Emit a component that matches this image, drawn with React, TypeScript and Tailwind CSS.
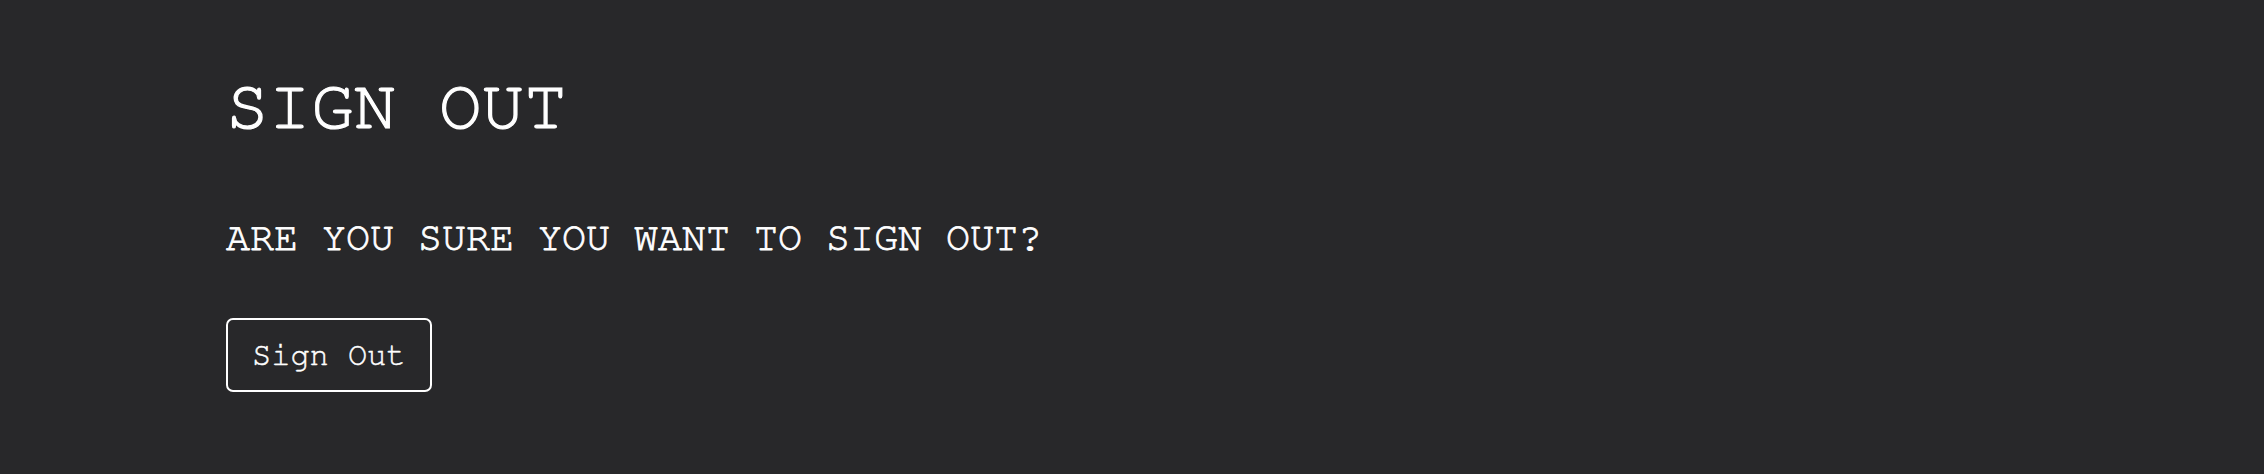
export default function App() {
  return (
    <div className="min-h-screen w-full bg-[#28282a] text-white pl-[226px] pt-[71px] font-['Nimbus_Mono_PS','FreeMono','Courier_New','Liberation_Mono',monospace]">
      <div className="flex flex-col items-start">
        <h1 className="text-[71px] leading-none font-normal [-webkit-text-stroke:1.2px_white]">SIGN OUT</h1>
        <p className="mt-[76px] text-[40px] leading-none [-webkit-text-stroke:0.8px_white]">ARE YOU SURE YOU WANT TO SIGN OUT?</p>
        <button className="mt-[60px] border-2 border-white rounded-[7px] px-6 py-[19px] text-[32px] leading-none text-white bg-transparent font-['Nimbus_Mono_PS','FreeMono','Courier_New','Liberation_Mono',monospace] [-webkit-text-stroke:0.4px_white]">
          Sign Out
        </button>
      </div>
    </div>
  );
}
